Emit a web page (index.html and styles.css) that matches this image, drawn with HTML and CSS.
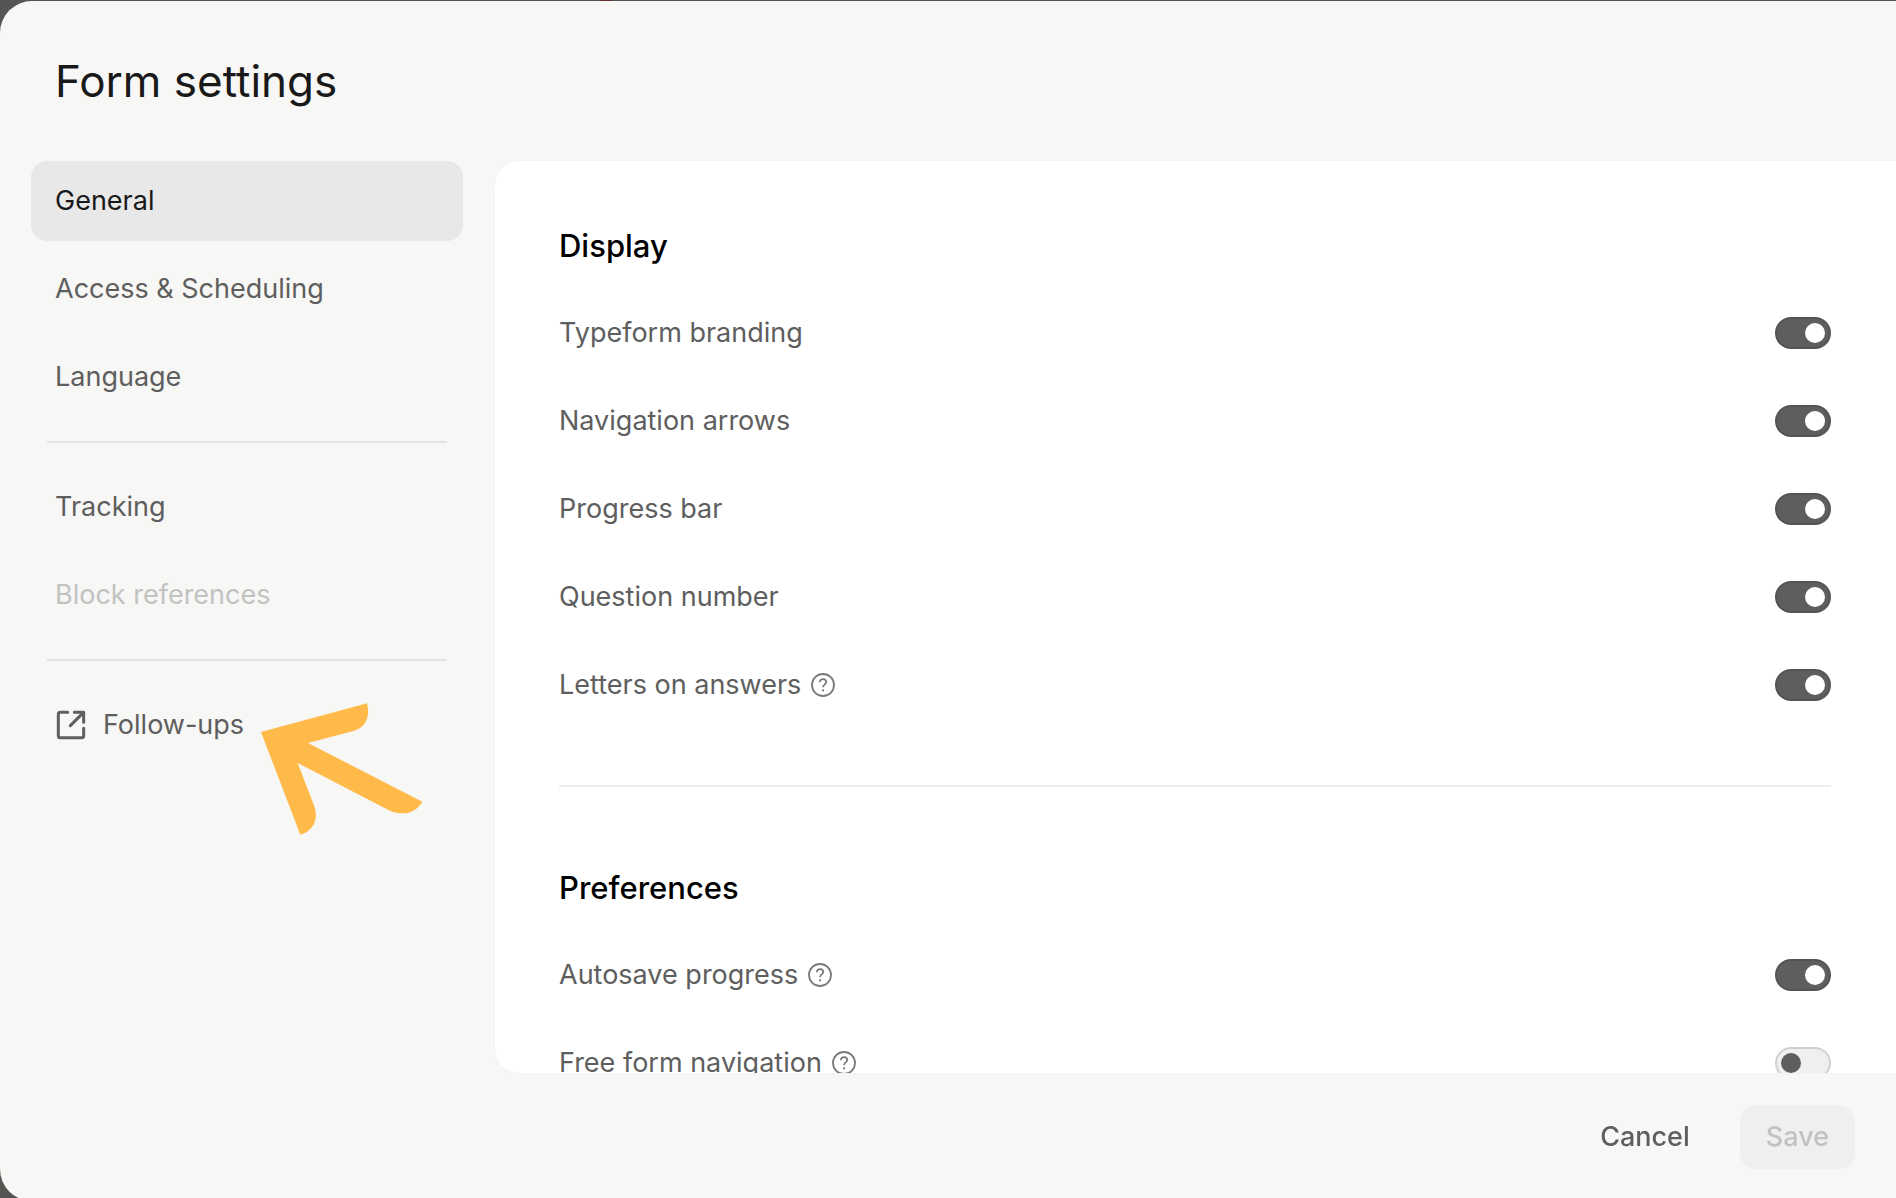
FILE: index.html
```html
<!DOCTYPE html>
<html lang="en">
<head>
<meta charset="utf-8">
<meta name="viewport" content="width=device-width, initial-scale=1">
<title>Form settings</title>
<link rel="stylesheet" href="styles.css">
</head>
<body>
<svg class="sprite" aria-hidden="true">
  <symbol id="icon-help" viewBox="0 0 24 24">
    <circle cx="12" cy="12" r="11" fill="none" stroke="currentColor" stroke-width="1.8"/>
    <path d="M8.9 9.3C8.9 7.3 10.2 6.1 12 6.1s3.2 1.2 3.2 2.9c0 2.3-3.1 2.5-3.1 5.2" fill="none" stroke="currentColor" stroke-width="1.8"/>
    <circle cx="12.1" cy="17.4" r="1.1" fill="currentColor"/>
  </symbol>
</svg>
<main class="modal">
  <header class="header">
    <h1 class="title">Form settings</h1>
  </header>
  <div class="content">
    <nav class="sidebar" aria-label="Settings">
      <button type="button" class="tab tab-active">General</button>
      <button type="button" class="tab">Access &amp; Scheduling</button>
      <button type="button" class="tab">Language</button>
      <hr class="divider">
      <button type="button" class="tab">Tracking</button>
      <button type="button" class="tab" disabled>Block references</button>
      <hr class="divider">
      <div class="follow">
        <a class="tab" href="#follow-ups">
          <svg class="icon-external" viewBox="0 0 96 96" fill="none" stroke="currentColor" stroke-width="9" stroke-linecap="round" aria-hidden="true">
            <path d="M38 10H16Q10 10 10 16V80Q10 86 16 86H80Q86 86 86 80V58"/>
            <path d="M58 10H86V40M85 11 46 50" stroke-linejoin="round"/>
          </svg>
          Follow-ups
        </a>
        <svg class="pointer" viewBox="783 70 486 396" aria-hidden="true">
          <path fill="#ffba49" d="M783 157 1101 71C1112 112 1096 144 1060 154L924 190 1267 366C1248 400 1206 412 1164 390L893 250 943 380C957 420 938 455 901 465Z"/>
        </svg>
      </div>
    </nav>
    <div class="panel">
      <section class="section">
        <h2 class="heading">Display</h2>
        <div class="rows">
          <div class="row"><label for="branding">Typeform branding</label><input class="switch" type="checkbox" id="branding" checked></div>
          <div class="row"><label for="arrows">Navigation arrows</label><input class="switch" type="checkbox" id="arrows" checked></div>
          <div class="row"><label for="progress">Progress bar</label><input class="switch" type="checkbox" id="progress" checked></div>
          <div class="row"><label for="number">Question number</label><input class="switch" type="checkbox" id="number" checked></div>
          <div class="row"><label for="letters">Letters on answers <svg class="icon-help"><use href="#icon-help"/></svg></label><input class="switch" type="checkbox" id="letters" checked></div>
        </div>
      </section>
      <section class="section">
        <h2 class="heading">Preferences</h2>
        <div class="rows">
          <div class="row"><label for="autosave">Autosave progress <svg class="icon-help"><use href="#icon-help"/></svg></label><input class="switch" type="checkbox" id="autosave" checked></div>
          <div class="row"><label for="freeform">Free form navigation <svg class="icon-help"><use href="#icon-help"/></svg></label><input class="switch" type="checkbox" id="freeform"></div>
        </div>
      </section>
    </div>
  </div>
  <footer class="footer">
    <button type="button" class="button">Cancel</button>
    <button type="button" class="button button-save" disabled>Save</button>
  </footer>
</main>
</body>
</html>
```
FILE: styles.css
```css
* {
  box-sizing: border-box;
}

body {
  margin: 0;
  height: 100vh;
  overflow: hidden;
  padding-top: 1px;
  background: linear-gradient(#6b2a2c, #6b2a2c) 600px 0 / 12px 1px no-repeat #555553;
  color: #5e5e5e;
  font-family: Inter, "Liberation Sans", sans-serif;
  font-size: 27px;
  line-height: 32px;
}

.sprite {
  display: none;
}

.modal {
  display: flex;
  flex-direction: column;
  height: calc(100vh + 2px);
  background: #f7f7f5;
  border-radius: 32px 0 0 32px;
}

.header {
  padding: 48px 55px;
}

.title {
  margin: 0;
  color: #191919;
  font-size: 44px;
  font-weight: 400;
  line-height: 64px;
}

.content {
  flex: 1;
  min-height: 0;
  display: flex;
  gap: 32px;
  padding-left: 31px;
}

.sidebar {
  flex: none;
  width: 432px;
  display: flex;
  flex-direction: column;
  gap: 8px;
}

.tab {
  display: flex;
  align-items: center;
  gap: 16px;
  height: 80px;
  padding: 0 24px;
  border: 0;
  border-radius: 16px;
  background: none;
  color: inherit;
  font: inherit;
  text-align: left;
  text-decoration: none;
}

.tab-active {
  background: #e8e8e8;
  color: #191919;
}

.tab:disabled {
  color: #c2c2c1;
}

.divider {
  width: 400px;
  height: 2px;
  margin: 16px;
  border: 0;
  background: #e3e3e2;
}

.follow {
  position: relative;
}

.icon-external {
  width: 32px;
  height: 32px;
}

.pointer {
  position: absolute;
  left: 230px;
  top: 18px;
  width: 162px;
  height: 132px;
}

.panel {
  flex: 1;
  overflow: auto;
  scrollbar-width: none;
  padding: 64px 65px 64px 64px;
  border-radius: 24px 0 0 24px;
  background: #fff;
  box-shadow: 0 0 0 1px #f3f3f2;
}

.section + .section {
  margin-top: 84px;
  padding-top: 80px;
  border-top: 2px solid #eee;
}

.heading {
  margin: 0 0 50px;
  color: #000;
  font-size: 31px;
  font-weight: 500;
  line-height: 42px;
}

.rows {
  display: flex;
  flex-direction: column;
  gap: 56px;
}

.row {
  display: flex;
  justify-content: space-between;
  align-items: center;
}

.row label {
  display: flex;
  align-items: center;
  gap: 10px;
}

.icon-help {
  width: 24px;
  height: 24px;
  color: #7a7a7a;
}

.switch {
  appearance: none;
  display: flex;
  align-items: center;
  width: 56px;
  height: 32px;
  margin: 0;
  padding: 0 4px;
  border: 2px solid #d0d0d0;
  border-radius: 16px;
  background: #efefef;
}

.switch::before {
  content: "";
  width: 20px;
  height: 20px;
  border-radius: 50%;
  background: #5e5e5e;
}

.switch:checked {
  justify-content: flex-end;
  border-color: #545454;
  background: #5e5e5e;
}

.switch:checked::before {
  background: #fff;
}

.footer {
  display: flex;
  justify-content: flex-end;
  gap: 24px;
  padding: 32px 41px 32px;
}

.button {
  height: 64px;
  padding: 0 26px;
  border: 0;
  border-radius: 16px;
  background: none;
  color: #5e5e5e;
  font: inherit;
  font-weight: 500;
}

.button-save {
  background: #efefee;
  color: #c2c2c1;
}
```
